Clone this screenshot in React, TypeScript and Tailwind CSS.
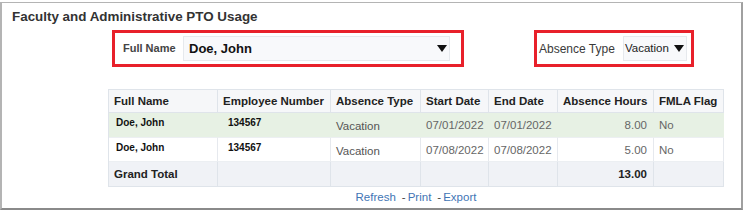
import React from "react";

const Arrow = () => (
  <svg width="10" height="7" viewBox="0 0 10 7" className="shrink-0">
    <polygon points="0,0 10,0 5,7" fill="#111" />
  </svg>
);

const cols = "grid grid-cols-[109px_113px_90px_68px_69px_96px_70px]";

type Row = { name: string; num: string; type: string; start: string; end: string; hours: string; fmla: string; green?: boolean };

const rows: Row[] = [
  { name: "Doe, John", num: "134567", type: "Vacation", start: "07/01/2022", end: "07/01/2022", hours: "8.00", fmla: "No", green: true },
  { name: "Doe, John", num: "134567", type: "Vacation", start: "07/08/2022", end: "07/08/2022", hours: "5.00", fmla: "No" },
];

export default function App() {
  return (
    <div className="w-[744px] h-[212px] bg-white pt-[2px] font-['Liberation_Sans',Arial,sans-serif]">
      <div className="w-[743px] h-[208px] border-2 border-t-[1.5px] border-[#b4b4b4] border-b-[#8a8a8a] border-r-[#a0a0a0]">
        <div className="pl-[10px] pt-[6px] text-[13.4px] leading-[16px] font-bold text-[#333]">
          Faculty and Administrative PTO Usage
        </div>
        <div className="flex mt-[5px] ml-[110px]">
          <div className="w-[352px] h-[37px] border-[3px] border-[#e8202a] flex items-center pl-[8px]">
            <div className="w-[60px] text-[11px] font-bold text-[#444]">Full Name</div>
            <div className="w-[267px] h-[25px] bg-[#f8f9fb] border border-[#e6e9ed] flex items-center justify-between pl-[5px] pr-[2px]">
              <span className="text-[13px] font-bold text-[#111]">Doe, John</span>
              <Arrow />
            </div>
          </div>
          <div className="ml-[70px] w-[160px] h-[37px] border-[3px] border-[#e8202a] flex items-center pl-[2px]">
            <div className="w-[84px] text-[12px] text-[#3a3a3a]">Absence Type</div>
            <div className="w-[64px] h-[25px] bg-[#f8f9fb] border border-[#e6e9ed] flex items-center justify-between pl-[1px] pr-[2px]">
              <span className="text-[11.5px] text-[#222]">Vacation</span>
              <Arrow />
            </div>
          </div>
        </div>
        <div className="ml-[106px] mt-[22px] w-[616px] border-l border-t border-[#dfe4ea]">
          <div className={`${cols} h-[23px] bg-[#f6f7f9] text-[11.5px] font-bold text-[#222]`}>
            {["Full Name", "Employee Number", "Absence Type", "Start Date", "End Date", "Absence Hours", "FMLA Flag"].map((h, i) => (
              <div key={i} className="border-r border-b border-[#dfe4ea] flex items-center pt-[2px] pl-[5px] whitespace-nowrap">
                {h}
              </div>
            ))}
          </div>
          {rows.map((r, i) => {
            const bg = r.green ? "bg-[#e7f1e4]" : "bg-white";
            const vb = r.green ? "border-r-[#e7f1e4]" : "border-r-[#e6e9ee]";
            return (
              <div key={i} className={`${cols} ${i === 0 ? "h-[25px]" : "h-[24px]"} ${bg}`}>
                <div className={`border-r border-b border-b-[#eceff2] ${vb} pl-[7px] pt-[4px] text-[10px] leading-[12px] font-bold text-[#111]`}>{r.name}</div>
                <div className={`border-r border-b border-b-[#eceff2] ${vb} pl-[10px] pt-[4px] text-[10px] leading-[12px] font-bold text-[#111]`}>{r.num}</div>
                <div className={`border-r border-b border-b-[#eceff2] ${vb} pl-[5px] pt-[6px] text-[11.5px] leading-[14px] text-[#555]`}>{r.type}</div>
                <div className={`border-r border-b border-b-[#eceff2] ${vb} pl-[5px] pt-[5px] text-[11.5px] leading-[14px] text-[#666]`}>{r.start}</div>
                <div className={`border-r border-b border-b-[#eceff2] ${vb} pl-[5px] pt-[5px] text-[11.5px] leading-[14px] text-[#666]`}>{r.end}</div>
                <div className={`border-r border-b border-b-[#eceff2] ${vb} pr-[6px] pt-[5px] text-right text-[11.5px] leading-[14px] text-[#666]`}>{r.hours}</div>
                <div className={`border-r border-b border-b-[#eceff2] ${vb} pl-[5px] pt-[5px] text-[11.5px] leading-[14px] text-[#666]`}>{r.fmla}</div>
              </div>
            );
          })}
          <div className={`${cols} h-[25px] bg-[#f0f2f6] text-[11.5px] font-bold text-[#222]`}>
            <div className="border-r border-b border-[#dfe4ea] flex items-center pl-[5px] pt-[1px]">Grand Total</div>
            <div className="border-r border-b border-[#dfe4ea]" />
            <div className="border-r border-b border-[#dfe4ea]" />
            <div className="border-r border-b border-[#dfe4ea]" />
            <div className="border-r border-b border-[#dfe4ea]" />
            <div className="border-r border-b border-[#dfe4ea] flex items-center justify-end pr-[6px] pt-[1px]">13.00</div>
            <div className="border-r border-b border-[#dfe4ea]" />
          </div>
        </div>
        <div className="ml-[106px] w-[616px] mt-[3px] flex justify-center text-[11.5px] leading-[14px]">
          <span className="text-[#3f75b5]">Refresh</span>
          <span className="text-[#444] ml-[6px]">-</span>
          <span className="text-[#3f75b5] ml-[2px]">Print</span>
          <span className="text-[#444] ml-[6px]">-</span>
          <span className="text-[#3f75b5] ml-[2px]">Export</span>
        </div>
      </div>
    </div>
  );
}
